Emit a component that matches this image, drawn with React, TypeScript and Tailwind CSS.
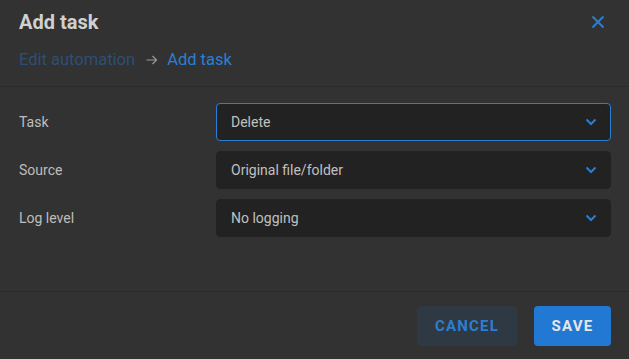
import React from "react";

const rows = [
  { label: "Task", value: "Delete", focused: true },
  { label: "Source", value: "Original file/folder", focused: false },
  { label: "Log level", value: "No logging", focused: false },
];

const Chevron = () => (
  <svg width="12" height="8" viewBox="0 0 12 8" fill="none">
    <path d="M1.5 1.5 6 6l4.5-4.5" stroke="#2a7fd4" strokeWidth="2" />
  </svg>
);

export default function App() {
  return (
    <div
      className="w-[629px] h-[359px] bg-[#323232] flex flex-col"
      style={{ fontFamily: "Roboto, 'Liberation Sans', sans-serif" }}
    >
      <div className="border-b border-[#2a2a2a] h-[87px] px-[19px] pt-[9px]">
        <div className="flex items-center justify-between">
          <h1 className="text-[20px] leading-[26px] font-bold text-[#d0d0d0]">Add task</h1>
          <svg width="14" height="14" viewBox="0 0 14 14" className="mr-[5px]">
            <path d="M1.5 1.5l11 11M12.5 1.5l-11 11" stroke="#2a7fd4" strokeWidth="2" />
          </svg>
        </div>
        <div className="flex items-center mt-[15px] text-[16.5px] leading-[20px]">
          <span className="text-[#2c4f76]">Edit automation</span>
          <svg width="12" height="10" viewBox="0 0 12 10" className="ml-[11px] mr-[9px]">
            <path d="M0.5 5h10M6.5 1l4 4-4 4" stroke="#9a9a9a" strokeWidth="1.2" fill="none" />
          </svg>
          <span className="text-[#2a7fd4]">Add task</span>
        </div>
      </div>

      <div className="flex-1 flex flex-col gap-[10px] pt-[16px] border-b border-[#2a2a2a]">
        {rows.map((r) => (
          <div key={r.label} className="flex items-center pl-[19px] pr-[18px]">
            <div className="w-[197px] text-[14px] text-[#bdbdbd]">{r.label}</div>
            <div
              className={`flex-1 h-[38px] rounded-[4px] bg-[#222222] flex items-center justify-between pl-[14px] pr-[13px] border ${
                r.focused ? "border-[#2a7fd4]" : "border-[#222222]"
              }`}
            >
              <span className="text-[14px] text-[#c0c0c0]">{r.value}</span>
              <Chevron />
            </div>
          </div>
        ))}
      </div>

      <div className="h-[67px] flex items-center justify-end gap-[17px] pr-[18px] pt-[1px]">
        <button className="w-[100px] h-[40px] rounded-[4px] bg-[#2f3944] text-[#2a7fd4] font-bold text-[15px] tracking-[1.2px]">
          CANCEL
        </button>
        <button className="w-[77px] h-[40px] rounded-[4px] bg-[#2279d4] text-[#e6e6e6] font-bold text-[15px] tracking-[1.2px]">
          SAVE
        </button>
      </div>
    </div>
  );
}
